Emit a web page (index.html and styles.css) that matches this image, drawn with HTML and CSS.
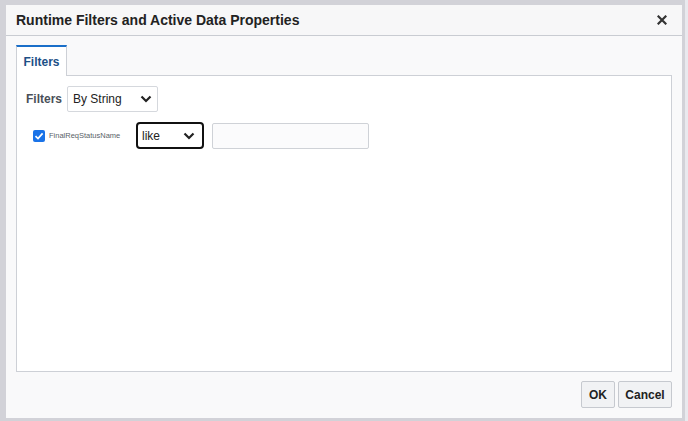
FILE: index.html
```html
<!DOCTYPE html>
<html>
<head>
<meta charset="utf-8">
<link rel="stylesheet" href="styles.css">
</head>
<body>
<div class="page">
  <div class="dialog">
    <div class="header">
      <div class="title">Runtime Filters and Active Data Properties</div>
      <div class="close">
        <svg width="10" height="10" viewBox="0 0 10 10"><path d="M1.5 1.5 L8.5 8.5 M8.5 1.5 L1.5 8.5" stroke="#333" stroke-width="2.2" stroke-linecap="square"/></svg>
      </div>
    </div>
    <div class="body">
      <div class="tabs">
        <div class="tab">Filters</div>
        <div class="tab-fill"></div>
      </div>
      <div class="panel">
        <div class="row-filters">
          <span class="label">Filters</span>
          <div class="select sel-string">
            <span>By String</span>
            <svg class="chev" width="12" height="8" viewBox="0 0 12 8"><path d="M1.5 1.5 L6 6 L10.5 1.5" fill="none" stroke="#222" stroke-width="2.2"/></svg>
          </div>
        </div>
        <div class="row-cond">
          <span class="check">
            <svg width="12" height="12" viewBox="0 0 12 12"><rect x="0" y="0" width="12" height="12" rx="2" fill="#1a73e8"/><path d="M2.5 6.2 L5 8.6 L9.6 3.4" fill="none" stroke="#fff" stroke-width="1.7"/></svg>
          </span>
          <span class="field">FinalReqStatusName</span>
          <div class="select sel-like">
            <span>like</span>
            <svg class="chev" width="12" height="8" viewBox="0 0 12 8"><path d="M1.5 1.5 L6 6 L10.5 1.5" fill="none" stroke="#222" stroke-width="2.2"/></svg>
          </div>
          <div class="input"></div>
        </div>
      </div>
      <div class="footer">
        <button class="btn ok">OK</button>
        <button class="btn cancel">Cancel</button>
      </div>
    </div>
  </div>
</div>
</body>
</html>
```
FILE: styles.css
```css
* { box-sizing: border-box; }
html, body { margin: 0; padding: 0; }
body {
  width: 688px;
  height: 421px;
  background: #e9e9ee;
  font-family: "Liberation Sans", Arial, sans-serif;
  overflow: hidden;
}
.page {
  width: 685px;
  height: 421px;
  padding: 5px 3px 0 6px;
  background: #d2d2d8;
}
.dialog {
  width: 676px;
  height: 413px;
  background: #f9f9fa;
  display: flex;
  flex-direction: column;
}
.header {
  height: 31px;
  border-bottom: 1px solid #c9ccd2;
  display: flex;
  align-items: center;
  padding: 0 15px 0 10px;
  background: #f7f7f8;
}
.title {
  flex: 1;
  font-size: 14px;
  font-weight: bold;
  color: #222;
}
.close { width: 10px; height: 10px; display: flex; }
.body {
  flex: 1;
  padding: 9px 10px 0 10px;
  display: flex;
  flex-direction: column;
}
.tabs {
  display: flex;
  height: 31px;
}
.tab {
  width: 51px;
  border-top: 2px solid #1a6fc9;
  border-left: 1px solid #cdd0d6;
  border-right: 1px solid #cdd0d6;
  background: #fff;
  font-size: 12px;
  font-weight: bold;
  color: #1d4f86;
  display: flex;
  align-items: center;
  justify-content: center;
  padding-top: 1px;
}
.tab-fill {
  flex: 1;
  border-bottom: 1px solid #cdd0d6;
}
.panel {
  height: 296px;
  background: #fff;
  border: 1px solid #cdd0d6;
  border-top: none;
  padding: 10px 0 0 9px;
}
.row-filters {
  display: flex;
  align-items: center;
  gap: 5px;
}
.label {
  font-size: 12px;
  font-weight: bold;
  color: #4a4f58;
}
.select {
  display: flex;
  align-items: center;
  justify-content: space-between;
  background: #fff;
  font-size: 12px;
  color: #222;
}
.sel-string {
  width: 91px;
  height: 26px;
  border: 1px solid #d5d8dd;
  border-radius: 2px;
  padding: 0 5px 0 5px;
}
.row-cond {
  display: flex;
  align-items: center;
  margin-top: 10px;
  padding-left: 7px;
}
.check { display: flex; width: 12px; height: 12px; }
.field {
  font-size: 7.5px;
  color: #5a5f68;
  margin-left: 4px;
  width: 87px;
}
.sel-like {
  width: 68px;
  height: 27px;
  border: 2px solid #111;
  border-radius: 4px;
  padding: 0 7px 0 4px;
  font-size: 12px;
}
.input {
  width: 157px;
  height: 26px;
  margin-left: 8px;
  border: 1px solid #cfd2d7;
  border-radius: 2px;
  background: #fbfbfc;
}
.footer {
  display: flex;
  justify-content: flex-end;
  gap: 3px;
  padding: 9px 0 0 0;
}
.btn {
  height: 27px;
  border: 1px solid #c6c9cf;
  border-radius: 2px;
  background: #f1f2f4;
  font-family: "Liberation Sans", Arial, sans-serif;
  font-size: 12px;
  font-weight: bold;
  color: #222;
  padding: 0;
}
.ok { width: 34px; }
.cancel { width: 54px; }
```
